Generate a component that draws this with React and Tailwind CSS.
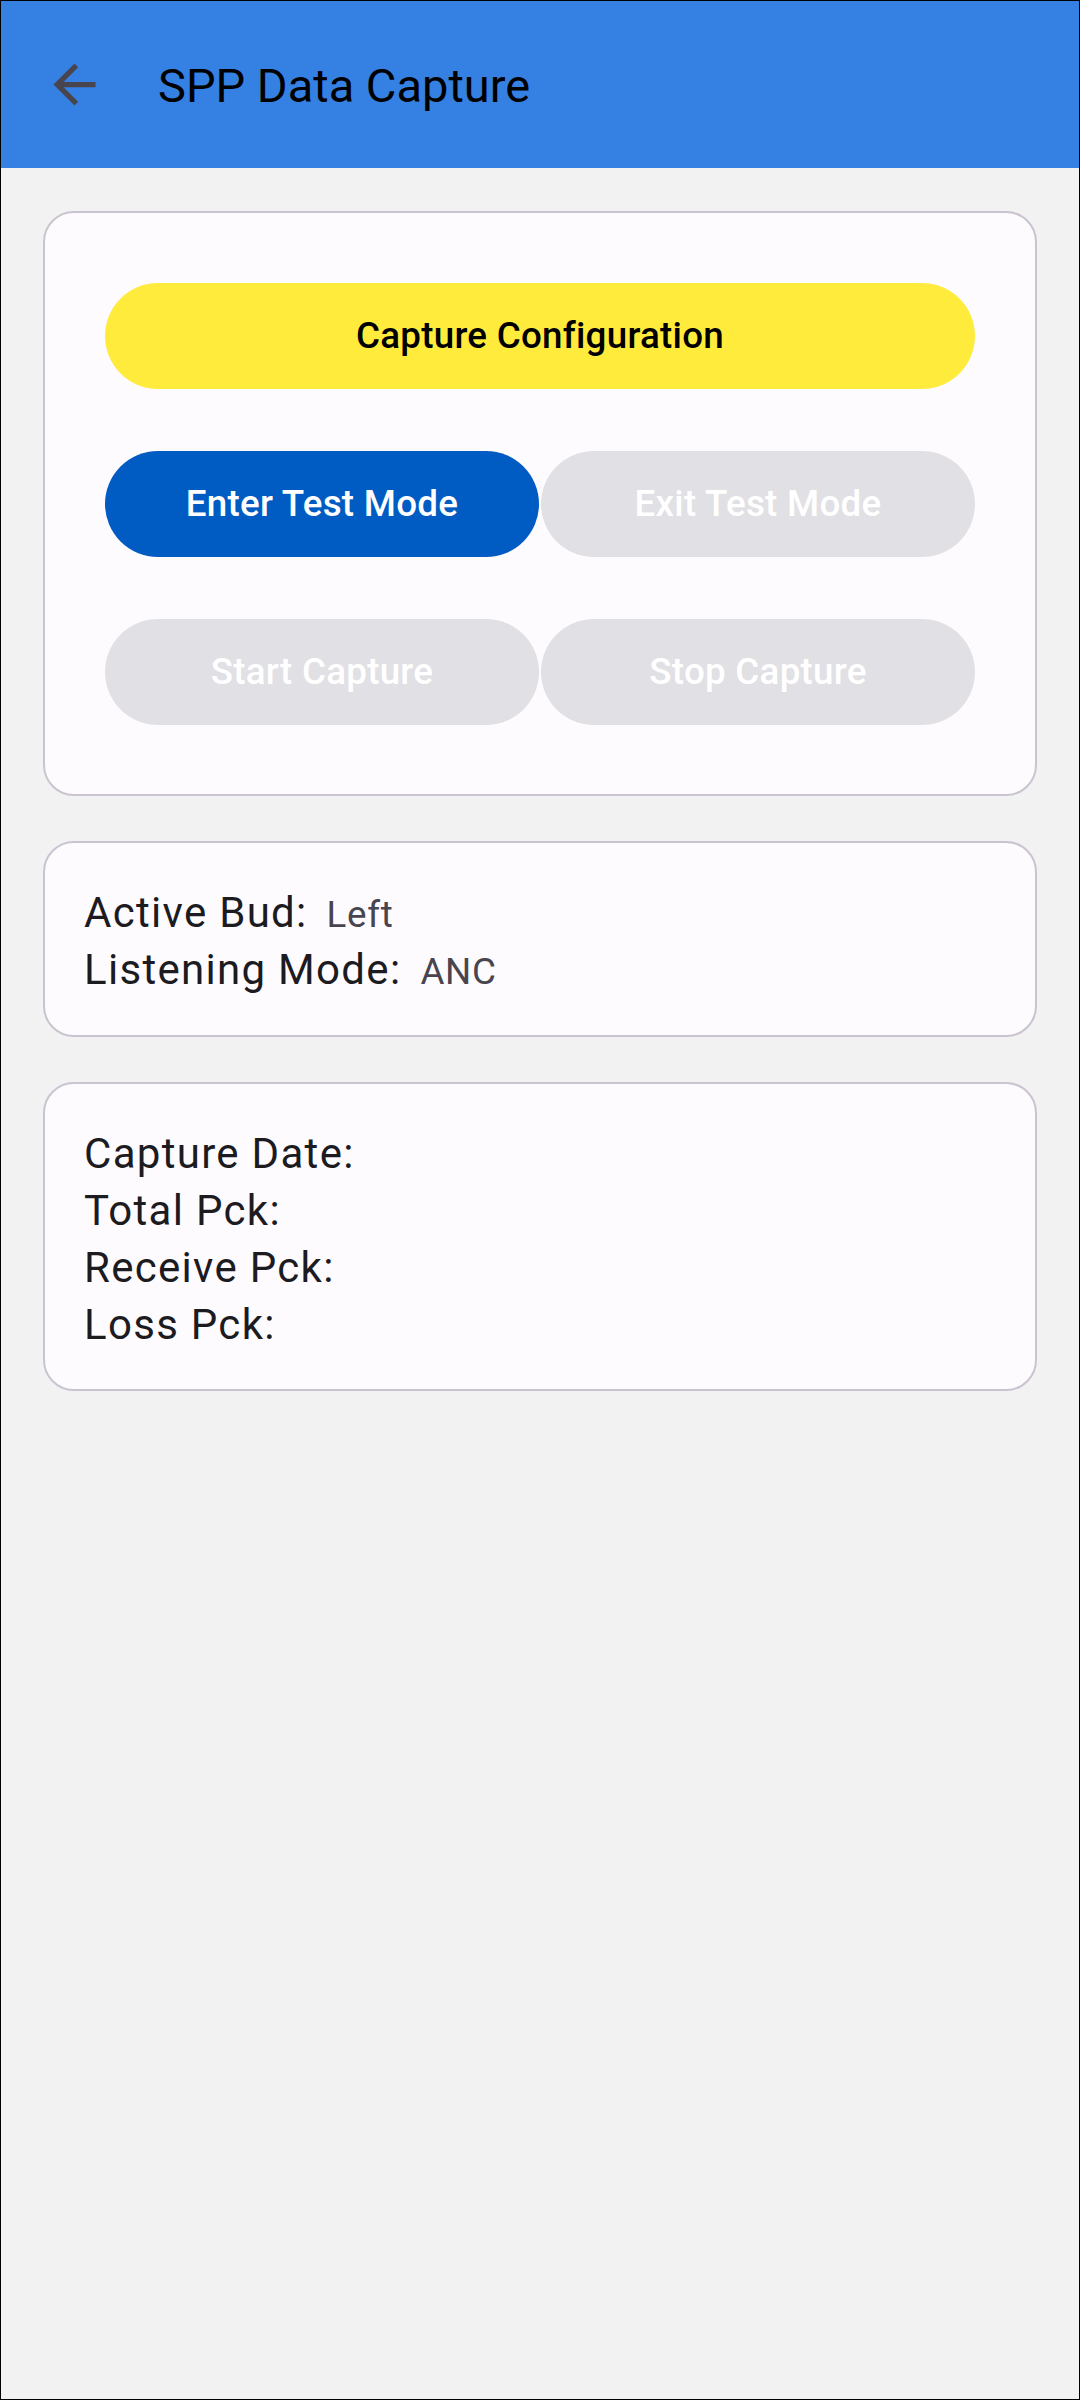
export default function App() {
  return (
    <div
      className="h-[2400px] w-[1080px] border border-black bg-[#f2f2f2]"
      style={{ fontFamily: 'Roboto, "Noto Sans", sans-serif' }}
    >
      <header className="flex h-[167px] items-center bg-[#3580e3]">
        <button className="ml-[42px] flex h-[63px] w-[63px] items-center justify-center">
          <svg viewBox="0 0 24 24" className="h-[63px] w-[63px]" fill="#49454f">
            <path d="M20 11H7.83l5.59-5.59L12 4l-8 8 8 8 1.41-1.41L7.83 13H20v-2z" />
          </svg>
        </button>
        <h1 className="ml-[52px] pt-[4px] text-[47px] font-normal text-black">SPP Data Capture</h1>
      </header>

      <main className="flex flex-col gap-[45px] px-[42px] pt-[43px]">
        <section className="rounded-[31px] border-2 border-[#cac4d0] bg-[#fefbff] px-[60px] pb-[69px] pt-[70px]">
          <PillButton className="w-full bg-[#ffeb3b] text-black">Capture Configuration</PillButton>

          <div className="mt-[62px] grid grid-cols-2 gap-[2px]">
            <PillButton className="bg-[#005bc3] text-white">Enter Test Mode</PillButton>
            <PillButton className="bg-[#e1e0e4] text-white">Exit Test Mode</PillButton>
          </div>

          <div className="mt-[62px] grid grid-cols-2 gap-[2px]">
            <PillButton className="bg-[#e1e0e4] text-white">Start Capture</PillButton>
            <PillButton className="bg-[#e1e0e4] text-white">Stop Capture</PillButton>
          </div>
        </section>

        <section className="rounded-[31px] border-2 border-[#cac4d0] bg-[#fefbff] px-[39px] pb-[36px] pt-[42px]">
          <InfoRow label="Active Bud:" value="Left" />
          <InfoRow label="Listening Mode:" value="ANC" />
        </section>

        <section className="rounded-[31px] border-2 border-[#cac4d0] bg-[#fefbff] px-[39px] pb-[36px] pt-[41px]">
          <p className="text-[42px] leading-[57px] tracking-[1.3px] text-[#1c1b1f]">Capture Date:</p>
          <p className="text-[42px] leading-[57px] tracking-[1.3px] text-[#1c1b1f]">Total Pck:</p>
          <p className="text-[42px] leading-[57px] tracking-[1.3px] text-[#1c1b1f]">Receive Pck:</p>
          <p className="text-[42px] leading-[57px] tracking-[1.3px] text-[#1c1b1f]">Loss Pck:</p>
        </section>
      </main>
    </div>
  );
}

function PillButton({ className, children }) {
  return (
    <button
      className={`flex h-[106px] items-center justify-center rounded-full text-[36.75px] font-medium tracking-[0.26px] ${className}`}
    >
      {children}
    </button>
  );
}

function InfoRow({ label, value }) {
  return (
    <div className="flex items-baseline leading-[55px]">
      <span className="text-[42px] tracking-[1.3px] text-[#1c1b1f]">{label}</span>
      <span className="ml-[19px] text-[36.75px] tracking-[0.66px] text-[#49454f]">{value}</span>
    </div>
  );
}
